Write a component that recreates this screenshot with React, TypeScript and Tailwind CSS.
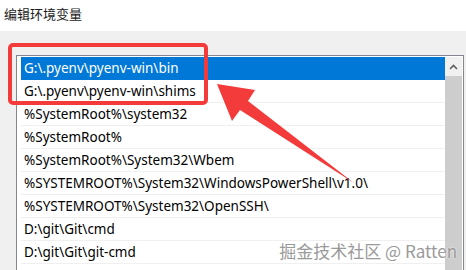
const paths = [
  "G:\\.pyenv\\pyenv-win\\bin",
  "G:\\.pyenv\\pyenv-win\\shims",
  "%SystemRoot%\\system32",
  "%SystemRoot%",
  "%SystemRoot%\\System32\\Wbem",
  "%SYSTEMROOT%\\System32\\WindowsPowerShell\\v1.0\\",
  "%SYSTEMROOT%\\System32\\OpenSSH\\",
  "D:\\git\\Git\\cmd",
  "D:\\git\\Git\\git-cmd",
  "",
];

export default function App() {
  return (
    <div className="relative flex h-[270px] w-[466px] flex-col overflow-hidden bg-white font-['Noto_Sans','Noto_Sans_CJK_SC',sans-serif]">
      <div className="h-[31px] shrink-0 bg-white pl-[4px] pt-[5px] font-['Noto_Sans_CJK_SC',sans-serif] text-[13px] leading-[18px] text-[#1b1b1b]">
        编辑环境变量
      </div>

      <div className="flex flex-1 flex-col bg-[#f0f0f0] pl-[16px] pr-[2px] pt-[24px]">
        <div className="flex flex-1 border border-[#828790] bg-white">
          <div className="flex flex-1 flex-col pl-[4px] pt-[1px]">
            {paths.map((p, i) => (
              <div
                key={i}
                className={[
                  "h-[23px] shrink-0 border-b pl-[3px] text-[13.5px] leading-[22px] whitespace-nowrap",
                  i === 0 ? "border-[#0078d7] bg-[#0078d7] text-white" : "border-[#f0f0f0] text-black",
                ].join(" ")}
              >
                {p}
              </div>
            ))}
          </div>
          <div className="flex w-[17px] shrink-0 flex-col pt-[1px] mr-[1px]">
            <div className="flex h-[19px] items-center justify-center bg-[#f0f0f0]">
              <svg width="9" height="6" viewBox="0 0 9 6">
                <polyline points="1,5 4.5,1.5 8,5" fill="none" stroke="#606060" strokeWidth="1.6" />
              </svg>
            </div>
            <div className="flex-1 bg-[#cdcdcd]" />
          </div>
        </div>
      </div>

      {/* annotation: red frame */}
      <div className="absolute left-[8px] top-[43px] h-[62px] w-[200px] rounded-[5px] border-4 border-[#f43b3b]" />

      {/* annotation: arrow */}
      <svg className="absolute left-0 top-0" width="466" height="270" viewBox="0 0 466 270">
        <polygon
          points="217,84 255,90 248,101 354,183 240,110 232,121"
          fill="#f43b3b"
        />
      </svg>

      <div className="absolute bottom-[9px] right-[9px] font-['Noto_Sans_CJK_SC',sans-serif] text-[17px] leading-[20px] text-[#9a9a9a] [text-shadow:0_0_2px_#ffffff]">
        掘金技术社区 @ Ratten
      </div>
    </div>
  );
}
